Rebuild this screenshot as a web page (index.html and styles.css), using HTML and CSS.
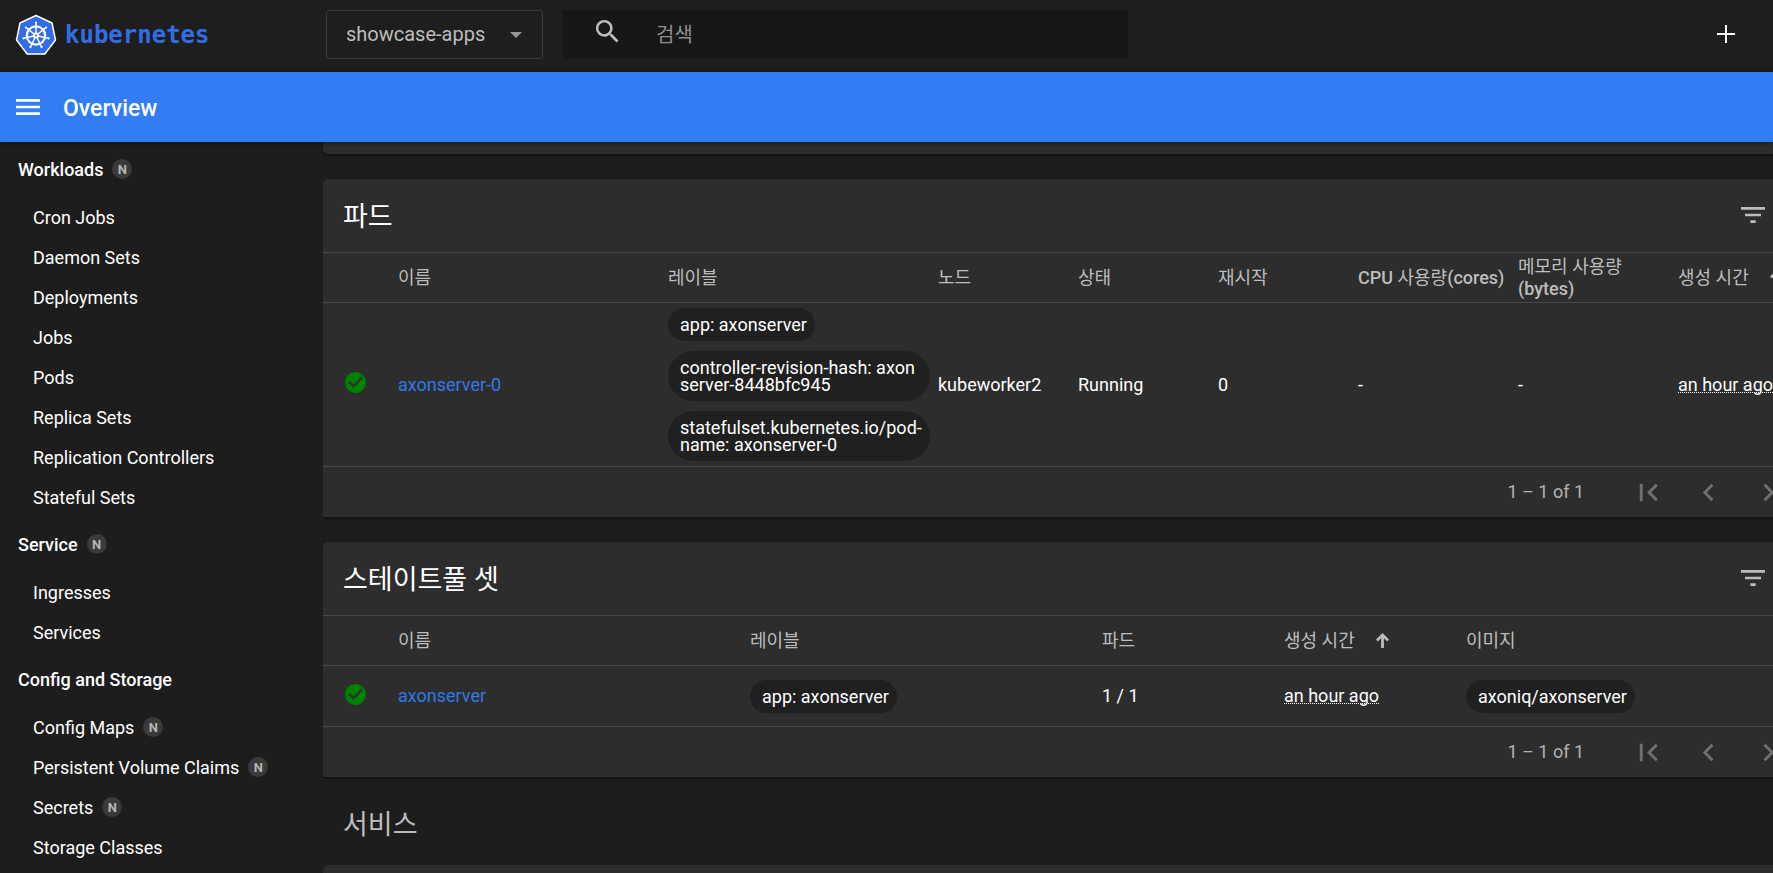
FILE: index.html
```html
<!DOCTYPE html>
<html lang="ko">
<head>
<meta charset="utf-8">
<meta name="viewport" content="width=device-width, initial-scale=1">
<title>Kubernetes Dashboard</title>
<link rel="stylesheet" href="styles.css">
</head>
<body>
<svg class="defs" aria-hidden="true">
  <symbol id="check" viewBox="0 0 24 24"><path d="M12 2C6.48 2 2 6.48 2 12s4.48 10 10 10 10-4.48 10-10S17.52 2 12 2zm-2 15l-5-5 1.41-1.41L10 14.17l7.59-7.59L19 8l-9 9z"/></symbol>
  <symbol id="filter" viewBox="0 0 24 24"><path d="M10 18h4v-2h-4v2zM3 6v2h18V6H3zm3 7h12v-2H6v2z"/></symbol>
  <symbol id="collapse" viewBox="0 0 24 24"><path d="M7.41 15.41L12 10.83l4.59 4.58L18 14l-6-6-6 6z"/></symbol>
  <symbol id="first" viewBox="0 0 24 24"><path d="M18.41 16.59L13.82 12l4.59-4.59L17 6l-6 6 6 6zM6 6h2v12H6z"/></symbol>
  <symbol id="prev" viewBox="0 0 24 24"><path d="M15.41 7.41L14 6l-6 6 6 6 1.41-1.41L10.83 12z"/></symbol>
  <symbol id="next" viewBox="0 0 24 24"><path d="M10 6L8.59 7.41 13.17 12l-4.58 4.59L10 18l6-6z"/></symbol>
  <symbol id="last" viewBox="0 0 24 24"><path d="M5.59 7.41L10.18 12l-4.59 4.59L7 18l6-6-6-6zM16 6h2v12h-2z"/></symbol>
  <symbol id="up" viewBox="0 0 14 16"><path d="M5.500 16V5.500L1.900 9 0 7 7 0l7 7-1.900 2L8.500 5.500V16z"/></symbol>
</svg>

<header class="topbar">
  <a class="brand" href="#">
    <svg class="brand-logo" viewBox="0 0 42 42" aria-hidden="true">
      <path class="hull" d="M21 1.500L37 9 40.500 26 29.800 40H12.200L1.500 26 5 9z"/>
      <g class="wheel">
        <circle cx="21" cy="21.500" r="9.200"/>
        <path d="M21 21.500V8M20 8.500h2"/>
        <path d="M21 21.500V8M20 8.500h2" transform="rotate(51.430 21 21.500)"/>
        <path d="M21 21.500V8M20 8.500h2" transform="rotate(102.860 21 21.500)"/>
        <path d="M21 21.500V8M20 8.500h2" transform="rotate(154.290 21 21.500)"/>
        <path d="M21 21.500V8M20 8.500h2" transform="rotate(205.710 21 21.500)"/>
        <path d="M21 21.500V8M20 8.500h2" transform="rotate(257.140 21 21.500)"/>
        <path d="M21 21.500V8M20 8.500h2" transform="rotate(308.570 21 21.500)"/>
      </g>
      <circle class="hub" cx="21" cy="21.500" r="3"/>
      <circle class="hub-dot" cx="21" cy="21.500" r="1"/>
    </svg>
    <span class="brand-name">kubernetes</span>
  </a>
  <div class="namespace">
    <select class="namespace-select" aria-label="Namespace"><option>showcase-apps</option></select>
    <svg class="namespace-arrow" viewBox="0 0 12 6" aria-hidden="true"><path d="M0 0h12L6 6z"/></svg>
  </div>
  <div class="search">
    <svg class="search-icon" viewBox="0 0 24 24" aria-hidden="true"><path d="M15.500 14h-.79l-.28-.27A6.471 6.471 0 0 0 16 9.500 6.500 6.500 0 1 0 9.500 16c1.610 0 3.090-.59 4.230-1.570l.27.28v.79l5 4.990L20.490 19l-4.990-5zm-6 0C7.010 14 5 11.990 5 9.500S7.010 5 9.500 5 14 7.010 14 9.500 11.990 14 9.500 14z"/></svg>
    <input class="search-input" type="text" placeholder="검색" aria-label="검색">
  </div>
  <button class="create" aria-label="Create"><svg viewBox="0 0 20 20"><path d="M10 1v18M1 10h18"/></svg></button>
</header>

<div class="toolbar">
  <button class="menu" aria-label="Menu"><svg viewBox="0 0 24 24"><path d="M3 18h18v-2H3v2zm0-5h18v-2H3v2zm0-7v2h18V6H3z"/></svg></button>
  <h1 class="toolbar-title">Overview</h1>
</div>

<div class="layout">
  <nav class="sidebar">
    <a class="nav-group" href="#">Workloads <span class="badge">N</span></a>
    <a class="nav-item" href="#">Cron Jobs</a>
    <a class="nav-item" href="#">Daemon Sets</a>
    <a class="nav-item" href="#">Deployments</a>
    <a class="nav-item" href="#">Jobs</a>
    <a class="nav-item" href="#">Pods</a>
    <a class="nav-item" href="#">Replica Sets</a>
    <a class="nav-item" href="#">Replication Controllers</a>
    <a class="nav-item" href="#">Stateful Sets</a>
    <a class="nav-group" href="#">Service <span class="badge">N</span></a>
    <a class="nav-item" href="#">Ingresses</a>
    <a class="nav-item" href="#">Services</a>
    <a class="nav-group" href="#">Config and Storage</a>
    <a class="nav-item" href="#">Config Maps <span class="badge">N</span></a>
    <a class="nav-item" href="#">Persistent Volume Claims <span class="badge">N</span></a>
    <a class="nav-item" href="#">Secrets <span class="badge">N</span></a>
    <a class="nav-item" href="#">Storage Classes</a>
  </nav>

  <main class="content">
    <div class="card card-end"></div>

    <section class="card">
      <div class="card-head">
        <h2 class="card-title">파드</h2>
        <button class="icon-button" aria-label="Filter"><svg><use href="#filter"/></svg></button>
        <button class="icon-button" aria-label="Collapse"><svg><use href="#collapse"/></svg></button>
      </div>
      <table class="grid">
        <colgroup><col class="c-status"><col><col><col class="c-node"><col class="c-node"><col class="c-node"><col class="c-metric"><col class="c-metric"><col class="c-created"></colgroup>
        <thead>
          <tr>
            <th></th><th>이름</th><th>레이블</th><th>노드</th><th>상태</th><th>재시작</th>
            <th class="nowrap"><b>CPU</b> 사용량<b>(cores)</b></th>
            <th>메모리 사용량<br><b>(bytes)</b></th>
            <th><span class="sort">생성 시간 <svg class="sort-icon"><use href="#up"/></svg></span></th>
          </tr>
        </thead>
        <tbody>
          <tr>
            <td class="status"><svg class="ok"><use href="#check"/></svg></td>
            <td><a class="link" href="#">axonserver-0</a></td>
            <td>
              <div class="chips">
                <span class="chip">app: axonserver</span>
                <span class="chip">controller-revision-hash: axon<wbr>server-8448bfc945</span>
                <span class="chip">statefulset.kubernetes.io/pod-<wbr>name: axonserver-0</span>
              </div>
            </td>
            <td>kubeworker2</td><td>Running</td><td>0</td><td>-</td><td>-</td>
            <td><span class="time">an hour ago</span></td>
          </tr>
        </tbody>
      </table>
      <div class="pager">
        <span class="pager-range">1 – 1 of 1</span>
        <button class="pager-button" aria-label="First page" disabled><svg><use href="#first"/></svg></button>
        <button class="pager-button" aria-label="Previous page" disabled><svg><use href="#prev"/></svg></button>
        <button class="pager-button" aria-label="Next page" disabled><svg><use href="#next"/></svg></button>
        <button class="pager-button" aria-label="Last page" disabled><svg><use href="#last"/></svg></button>
      </div>
    </section>

    <section class="card">
      <div class="card-head">
        <h2 class="card-title">스테이트풀 셋</h2>
        <button class="icon-button" aria-label="Filter"><svg><use href="#filter"/></svg></button>
        <button class="icon-button" aria-label="Collapse"><svg><use href="#collapse"/></svg></button>
      </div>
      <table class="grid">
        <colgroup><col class="c-status"><col><col><col class="c-pods"><col class="c-pods"><col class="c-images"></colgroup>
        <thead>
          <tr>
            <th></th><th>이름</th><th>레이블</th><th>파드</th>
            <th><span class="sort">생성 시간 <svg class="sort-icon"><use href="#up"/></svg></span></th>
            <th>이미지</th>
          </tr>
        </thead>
        <tbody>
          <tr>
            <td class="status"><svg class="ok"><use href="#check"/></svg></td>
            <td><a class="link" href="#">axonserver</a></td>
            <td><div class="chips"><span class="chip">app: axonserver</span></div></td>
            <td>1 / 1</td>
            <td><span class="time">an hour ago</span></td>
            <td><div class="chips"><span class="chip">axoniq/axonserver</span></div></td>
          </tr>
        </tbody>
      </table>
      <div class="pager">
        <span class="pager-range">1 – 1 of 1</span>
        <button class="pager-button" aria-label="First page" disabled><svg><use href="#first"/></svg></button>
        <button class="pager-button" aria-label="Previous page" disabled><svg><use href="#prev"/></svg></button>
        <button class="pager-button" aria-label="Next page" disabled><svg><use href="#next"/></svg></button>
        <button class="pager-button" aria-label="Last page" disabled><svg><use href="#last"/></svg></button>
      </div>
    </section>

    <h2 class="section-title">서비스</h2>
    <section class="card card-start"></section>
  </main>
</div>
</body>
</html>
```

FILE: styles.css
```css
* { box-sizing: border-box; }

body {
  margin: 0;
  height: 100vh;
  display: flex;
  flex-direction: column;
  overflow: hidden;
  background: #1d1d1d;
  color: #fff;
  font-family: Roboto, "Noto Sans CJK KR", sans-serif;
  font-size: 18px;
  line-height: 22px;
}

button { border: 0; padding: 0; background: none; color: inherit; font: inherit; }
a { color: inherit; text-decoration: none; }
svg { display: block; fill: currentColor; }
.defs { display: none; }

/* Top bar */
.topbar {
  flex: none;
  display: flex;
  align-items: center;
  height: 72px;
  padding: 0 35px 4px 15px;
  background: #1e1e1e;
}
.brand { display: flex; align-items: center; gap: 8px; width: 311px; flex: none; padding-top: 2px; color: #326de6; }
.brand-logo { width: 42px; height: 42px; }
.hull { fill: #326de6; stroke: #fff; stroke-width: 1.5; stroke-linejoin: round; }
.wheel { fill: none; stroke: #fff; stroke-width: 1.5; }
.wheel > circle { stroke-width: 2.2; }
.hub { fill: #fff; }
.hub-dot { fill: #326de6; }
.brand-name { font: bold 24px/28px "DejaVu Sans Mono", monospace; }

.namespace { position: relative; width: 217px; height: 49px; flex: none; }
.namespace-select {
  width: 100%;
  height: 100%;
  padding: 0 50px 0 19px;
  appearance: none;
  border: 1px solid #3c3c3c;
  border-radius: 3px;
  background: transparent;
  color: #bdbdbd;
  font: inherit;
  font-size: 20px;
}
.namespace-arrow { position: absolute; right: 21px; top: 22px; width: 12px; height: 6px; color: #979797; }

.search {
  display: flex;
  align-items: center;
  width: 565px;
  height: 49px;
  margin-left: 20px;
  padding-left: 29px;
  border-radius: 3px;
  background: #171717;
}
.search-icon { width: 31px; height: 31px; margin-bottom: 5px; color: #bdbdbd; }
.search-input {
  flex: 1;
  min-width: 0;
  margin-left: 33px;
  padding: 2px 0 0;
  border: 0;
  outline: 0;
  background: transparent;
  color: #fff;
  font: inherit;
  font-size: 20px;
}
.search-input::placeholder { color: #8f8f8f; opacity: 1; }
.create { margin-left: auto; padding: 2px; }
.create svg { width: 20px; height: 20px; stroke: #fff; stroke-width: 2; }

/* Page toolbar */
.toolbar {
  position: relative;
  z-index: 1;
  flex: none;
  display: flex;
  align-items: center;
  gap: 19px;
  height: 70px;
  padding-left: 12px;
  background: #327cf4;
  box-shadow: 0 1px 5px rgba(0, 0, 0, .5);
}
.menu svg { width: 32px; height: 32px; }
.toolbar-title { margin: 0; padding-top: 3px; font-size: 23px; line-height: 28px; font-weight: 500; }

.layout { flex: 1; min-height: 0; display: flex; }

/* Sidebar */
.sidebar { width: 323px; flex: none; overflow: hidden; }
.nav-group, .nav-item { display: flex; align-items: center; gap: 9px; }
.nav-group { height: 55px; padding-left: 18px; font-weight: 500; }
.nav-item { height: 40px; padding: 2px 0 0 33px; }
.badge {
  width: 20px;
  height: 20px;
  margin-bottom: 2px;
  border-radius: 50%;
  background: #3a3a3a;
  color: #b5b5b5;
  font-size: 13px;
  line-height: 22px;
  font-weight: 700;
  text-align: center;
}

/* Content cards */
.content { flex: 1; min-width: 0; overflow: hidden; }
.card {
  width: calc(100% + 85px);
  margin-bottom: 25px;
  border-radius: 5px 5px 0 0;
  background: #2d2d2d;
  box-shadow: 0 2px 3px rgba(0, 0, 0, .35);
}
.card-end { height: 12px; border-radius: 0 0 5px 5px; }
.card-start { height: 60px; margin: 0; }
.card-head { display: flex; align-items: center; height: 73px; padding: 0 15px 0 20px; }
.card-title { flex: 1; margin: 0; padding-top: 2px; font-size: 27px; line-height: 32px; font-weight: 400; }
.icon-button { width: 60px; display: flex; justify-content: center; color: #bdbdbd; }
.icon-button svg { width: 32px; height: 32px; margin-bottom: 2px; }
.section-title {
  margin: -25px 0 0;
  padding: 32px 20px 24px;
  color: #bdbdbd;
  font-size: 27px;
  line-height: 32px;
  font-weight: 400;
}

.grid { width: 100%; table-layout: fixed; border-collapse: separate; border-spacing: 0; }
.grid th, .grid td { padding: 0 8px 0 0; border-top: 1px solid #474747; text-align: left; vertical-align: middle; }
.grid th { height: 50px; color: #bdbdbd; font-weight: 400; }
.grid th b { font-weight: 500; }
.grid th.nowrap { padding: 0; white-space: nowrap; }
.grid td { height: 61px; }
.grid .status { padding-left: 20px; }
.c-status { width: 75px; }
.c-node { width: 140px; }
.c-metric { width: 160px; }
.c-created { width: 180px; }
.c-pods { width: 182px; }
.c-images { width: 392px; }
.ok { width: 25px; height: 25px; margin-bottom: 4px; color: #008000; }
.link { color: #3279e8; }
.sort { display: flex; align-items: center; gap: 21px; }
.sort-icon { width: 13px; height: 15px; flex: none; }
.time { text-decoration: underline dotted 1px; text-underline-offset: 1px; text-decoration-skip-ink: none; }

.chips { display: flex; flex-direction: column; align-items: flex-start; gap: 10px; padding: 5px 0; }
.chip { padding: 8px 8px 8px 12px; border-radius: 25px; background: #202020; line-height: 17px; }

.pager { display: flex; align-items: center; justify-content: flex-end; height: 51px; border-top: 1px solid #474747; color: #b3b3b3; }
.pager-range { margin-right: 34px; }
.pager-button { width: 60px; display: flex; justify-content: center; color: #707070; }
.pager-button svg { width: 35px; height: 35px; }
```
